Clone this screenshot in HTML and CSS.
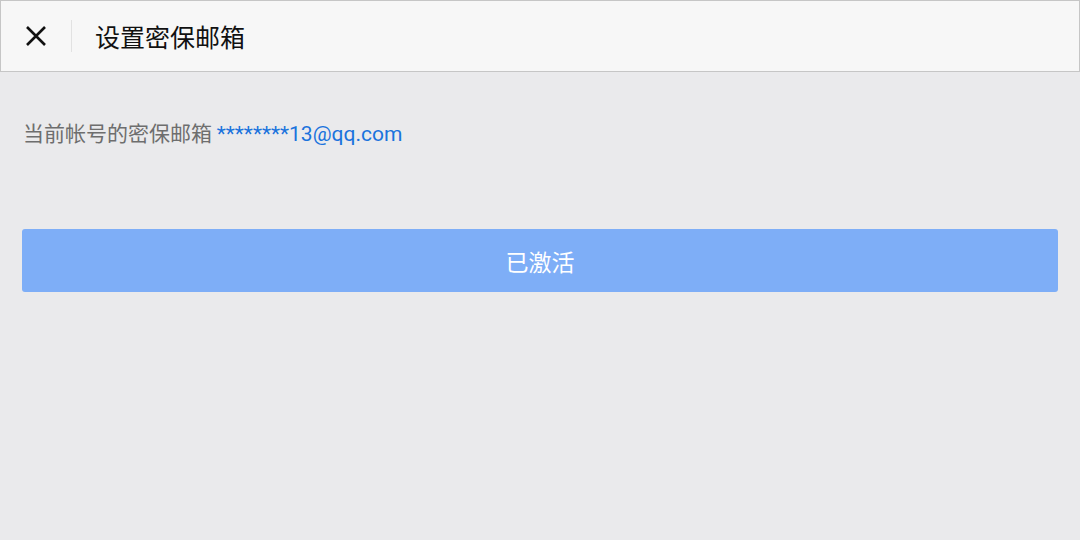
FILE: index.html
```html
<!DOCTYPE html>
<html lang="zh">
<head>
<meta charset="utf-8">
<link rel="stylesheet" href="styles.css">
</head>
<body>
<header class="bar">
  <button class="close" aria-label="关闭">
    <svg width="22" height="22" viewBox="0 0 22 22"><path d="M2 2 L20 20 M20 2 L2 20" stroke="#111" stroke-width="2.6" fill="none"/></svg>
  </button>
  <span class="divider"></span>
  <h1 class="title">设置密保邮箱</h1>
</header>
<main class="content">
  <p class="info">当前帐号的密保邮箱 <span class="email">********13@qq.com</span></p>
  <button class="action">已激活</button>
</main>
</body>
</html>
```
FILE: styles.css
```css
html, body {
  margin: 0;
  padding: 0;
  height: 100%;
  background: #eaeaec;
  font-family: "Noto Sans CJK SC", "Roboto", sans-serif;
}
.bar {
  box-sizing: border-box;
  height: 72px;
  background: #f7f7f7;
  border: 1px solid #c6c6c6;
  display: flex;
  align-items: center;
}
.close {
  border: 0;
  background: none;
  padding: 0;
  margin-left: 24px;
  width: 22px;
  height: 22px;
  display: flex;
}
.divider {
  width: 1px;
  height: 32px;
  background: #e2e2e2;
  margin-left: 24px;
}
.title {
  margin: 0 0 0 23px;
  font-size: 25px;
  font-weight: 400;
  color: #111;
  line-height: 1;
}
.content {
  padding: 0 22px 0 22px;
}
.info {
  margin: 46px 0 0 1px;
  font-size: 21px;
  color: #6e6e6e;
  line-height: 28px;
}
.email {
  color: #1a73dd;
  font-size: 21px;
  font-family: "Roboto", "Noto Sans CJK SC", sans-serif;
}
.action {
  display: block;
  width: 100%;
  height: 63px;
  margin-top: 81px;
  border: 0;
  border-radius: 3px;
  background: #7eaef7;
  color: #fff;
  font-family: "Noto Sans CJK SC", sans-serif;
  font-size: 23px;
}
```
